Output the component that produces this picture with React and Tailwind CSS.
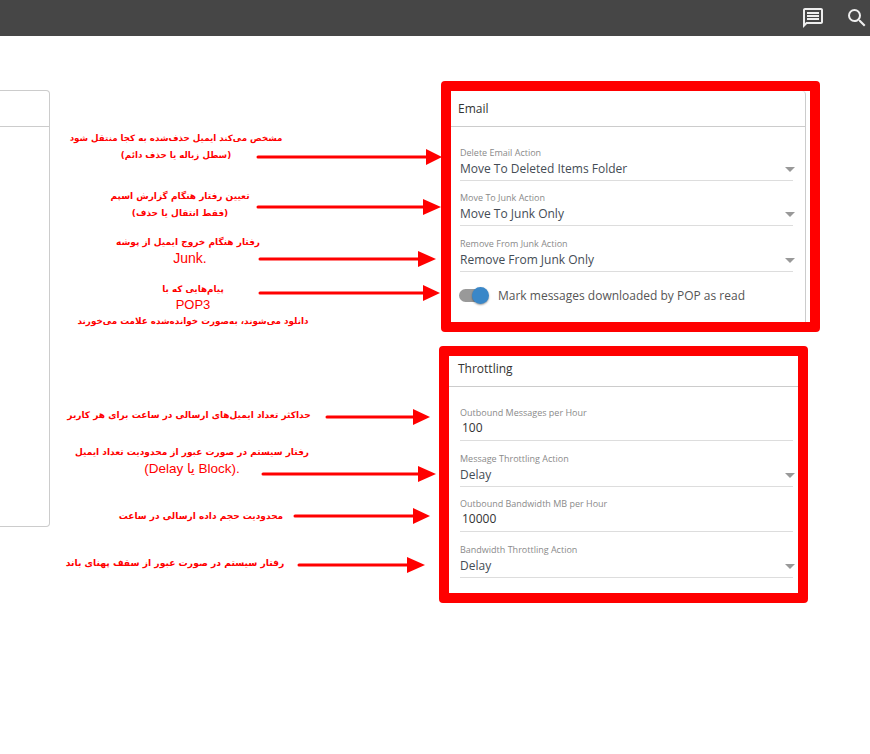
import React from "react";
import { MdOutlineMessage, MdSearch } from "react-icons/md";

const UI = "font-['Open_Sans',sans-serif]";
const FA = "font-['DejaVu_Sans',sans-serif]";
const LATIN = "font-['Liberation_Sans',sans-serif]";

function Caret() {
  return <span className="absolute right-[-2px] bottom-[8px] w-0 h-0 border-x-[5px] border-x-transparent border-t-[5px] border-t-[#999999]" />;
}

function SelectField({ label, value }) {
  return (
    <div className="relative flex flex-col justify-end h-[45.4px] border-b border-[#dddddd] pb-[1px]">
      <div className="text-[9px] leading-3 text-[#8a8a8a] truncate">{label}</div>
      <div className="text-xs leading-5 text-[#444c55]">{value}</div>
      <Caret />
    </div>
  );
}

function NumberField({ label, value }) {
  return (
    <div className="flex flex-col justify-end h-[45.4px] border-b border-[#dddddd] pb-[3px]">
      <div className="text-[9px] leading-3 text-[#8a8a8a] truncate">{label}</div>
      <div className="text-xs leading-[18px] text-[#333333] pl-[2px]">{value}</div>
    </div>
  );
}

function Arrow({ x1, y, tip, base }) {
  return (
    <g fill="#ff0000" stroke="none">
      <line x1={x1 + 1} y1={y} x2={base + 2} y2={y} stroke="#ff0000" strokeWidth="3" strokeLinecap="round" />
      <polygon points={`${base},${y - 8} ${tip},${y} ${base},${y + 8}`} />
    </g>
  );
}

const note = `absolute -translate-x-1/2 whitespace-nowrap text-center text-[#ff0000] ${FA} font-bold`;

export default function App() {
  return (
    <div className={`relative h-[754px] w-[870px] overflow-hidden bg-white ${UI}`}>
      <header className="flex h-9 items-center justify-end bg-[#464646] text-[#eeeeee]">
        <MdOutlineMessage className="mr-5 h-6 w-6" />
        <MdSearch className="mr-[1px] h-6 w-6" />
      </header>

      <main className="flex items-start">
        <section className="mt-[54px] h-[437px] w-[50px] shrink-0 rounded-r border border-l-0 border-[#cccccc]">
          <div className="h-9 border-b border-[#cccccc]" />
        </section>

        <div className="ml-[391px] flex flex-col pt-[45px]">
          <section className="h-[251px] w-[379px] rounded border-[10px] border-[#ff0000] bg-white">
            <div className="h-full w-[355px] rounded-tr border-r border-[#cccccc]">
              <h2 className="flex h-9 items-center border-b border-[#cccccc] pl-[7px] text-xs text-[#333333]">Email</h2>
              <div className="pl-[9px] pr-[12px] pt-[8.4px]">
                <SelectField label="Delete Email Action" value="Move To Deleted Items Folder" />
                <SelectField label="Move To Junk Action" value="Move To Junk Only" />
                <SelectField label="Remove From Junk Action" value="Remove From Junk Only" />
                <div className="mt-[16px] flex items-center">
                  <span className="relative -ml-[1px] h-[13px] w-[28px] rounded-full bg-[#999999]">
                    <span className="absolute right-[-2px] top-[-2px] h-[17px] w-[17px] rounded-full bg-[#3a87c8] shadow-[0_1px_2px_rgba(0,0,0,0.4)]" />
                  </span>
                  <span className="ml-[11px] text-xs text-[#555555]">Mark messages downloaded by POP as read</span>
                </div>
              </div>
            </div>
          </section>

          <section className="-ml-[2px] mt-[14px] h-[257px] w-[369px] rounded border-[10px] border-[#ff0000] bg-white">
            <h2 className="flex h-[31px] items-center border-b border-[#cccccc] pb-1 pl-[9px] text-xs text-[#333333]">Throttling</h2>
            <div className="pl-[11px] pr-[5px] pt-[9px]">
              <NumberField label="Outbound Messages per Hour" value="100" />
              <SelectField label="Message Throttling Action" value="Delay" />
              <NumberField label="Outbound Bandwidth MB per Hour" value="10000" />
              <SelectField label="Bandwidth Throttling Action" value="Delay" />
            </div>
          </section>
        </div>
      </main>

      <svg className="pointer-events-none absolute left-0 top-0" width="870" height="754">
        <Arrow x1={257} y={157} tip={442} base={426} />
        <Arrow x1={257} y={207} tip={441} base={423} />
        <Arrow x1={259} y={259} tip={436} base={418} />
        <Arrow x1={259} y={293} tip={440} base={423} />
        <Arrow x1={326} y={417} tip={430} base={413} />
        <Arrow x1={262} y={474} tip={436} base={418} />
        <Arrow x1={294} y={516} tip={430} base={413} />
        <Arrow x1={298} y={565} tip={425} base={407} />
      </svg>

      <div dir="rtl" className={`${note} left-[176px] top-[130px] text-[8.7px] leading-[17px]`}>
        <div>مشخص می‌کند ایمیل حذف‌شده به کجا منتقل شود</div>
        <div>(سطل زباله یا حذف دائم)</div>
      </div>
      <div dir="rtl" className={`${note} left-[180px] top-[188px] text-[9px] leading-[17px]`}>
        <div>تعیین رفتار هنگام گزارش اسپم</div>
        <div>(فقط انتقال یا حذف)</div>
      </div>
      <div dir="rtl" className={`${note} left-[188px] top-[234px] text-[9px] leading-[17px]`}>
        <div>رفتار هنگام خروج ایمیل از پوشه</div>
        <div dir="ltr" className={`${LATIN} pl-1 text-sm font-normal leading-[15px]`}>Junk.</div>
      </div>
      <div dir="rtl" className={`${note} left-[193px] top-[281px] text-[8.8px] leading-4`}>
        <div>پیام‌هایی که با</div>
        <div dir="ltr" className={`${LATIN} text-[13px] font-normal`}>POP3</div>
        <div>دانلود می‌شوند، به‌صورت خوانده‌شده علامت می‌خورند</div>
      </div>
      <div dir="rtl" className={`${note} left-[189px] top-[407px] text-[9px] leading-4`}>
        حداکثر تعداد ایمیل‌های ارسالی در ساعت برای هر کاربر
      </div>
      <div dir="rtl" className={`${note} left-[192px] top-[444px] text-[9px] leading-4`}>
        <div>رفتار سیستم در صورت عبور از محدودیت تعداد ایمیل</div>
        <div dir="ltr" className={`${LATIN} text-[13.5px] font-normal`}>
          (Delay <span className={FA}>یا</span> Block).
        </div>
      </div>
      <div dir="rtl" className={`${note} left-[201px] top-[508px] text-[9px] leading-4`}>
        محدودیت حجم داده ارسالی در ساعت
      </div>
      <div dir="rtl" className={`${note} left-[175px] top-[555px] text-[9.2px] leading-4`}>
        رفتار سیستم در صورت عبور از سقف پهنای باند
      </div>
    </div>
  );
}
